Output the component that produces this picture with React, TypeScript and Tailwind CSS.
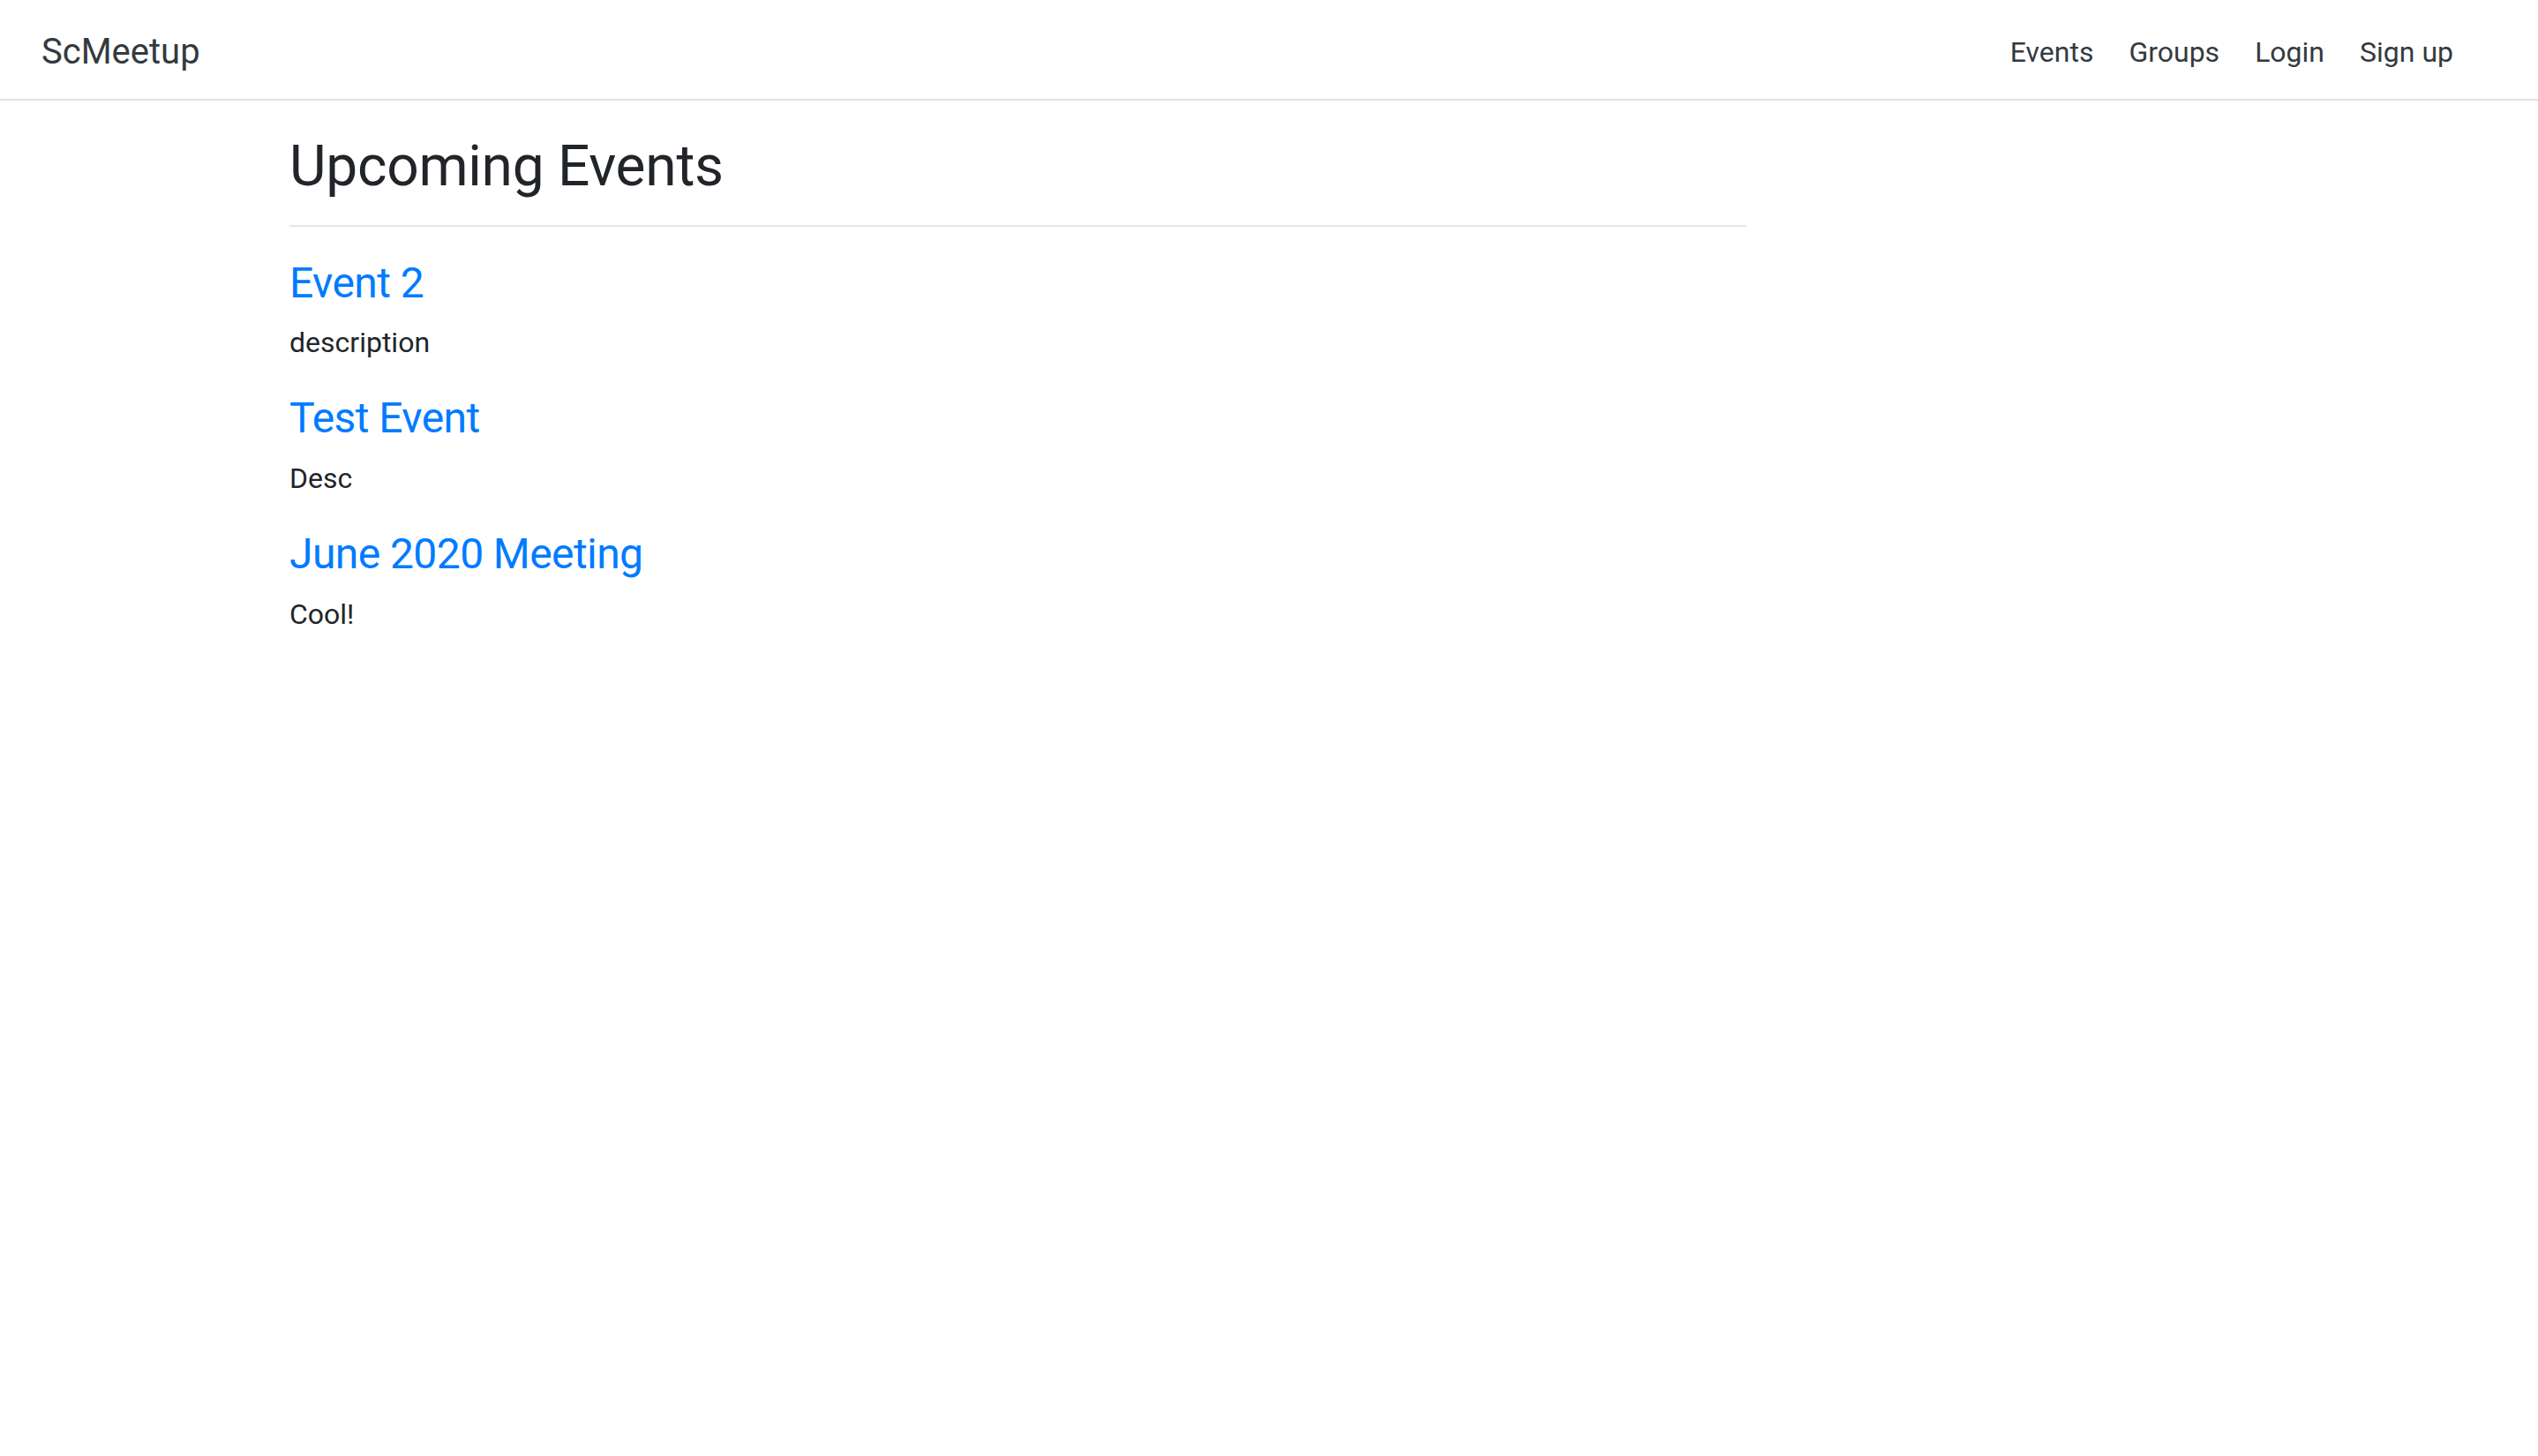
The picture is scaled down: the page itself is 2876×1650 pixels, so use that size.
import React from "react";

const events = [
  { title: "Event 2", desc: "description" },
  { title: "Test Event", desc: "Desc" },
  { title: "June 2020 Meeting", desc: "Cool!" },
];

export default function App() {
  return (
    <div className="min-h-screen w-full bg-white text-[#212529] font-['Roboto','Liberation_Sans',sans-serif]">
      <nav className="flex h-[114px] items-center border-b-2 border-[#dee2e6] pt-[5px] pl-[47px] pr-[76px]">
        <a href="#" className="text-[40px] leading-[60px] text-[#343a40] no-underline">
          ScMeetup
        </a>
        <ul className="ml-auto flex items-center">
          {["Events", "Groups", "Login", "Sign up"].map((l) => (
            <li key={l}>
              <a href="#" className="block px-5 text-[32px] leading-[48px] text-[#343a40]">
                {l}
              </a>
            </li>
          ))}
        </ul>
      </nav>
      <main className="mx-auto w-[2280px] px-[30px] pt-[37px]">
        <div className="w-[1651px]">
          <h2 className="m-0 text-[64px] font-normal leading-[1.2] tracking-[-0.004em] text-[#212529]">
            Upcoming Events
          </h2>
          <hr className="mt-[27px] mb-0 border-0 border-t-2 border-[#e6e6e6]" />
          <div className="pt-[35px]">
            {events.map((e) => (
              <div key={e.title}>
                <h4 className="mb-[15px] text-[48px] font-normal leading-[1.2] tracking-[-0.012em]">
                  <a href="#" className="text-[#007bff]">
                    {e.title}
                  </a>
                </h4>
                <p className="mb-[33px] text-[32px] leading-[48px] text-[#212529]">{e.desc}</p>
              </div>
            ))}
          </div>
        </div>
      </main>
    </div>
  );
}
